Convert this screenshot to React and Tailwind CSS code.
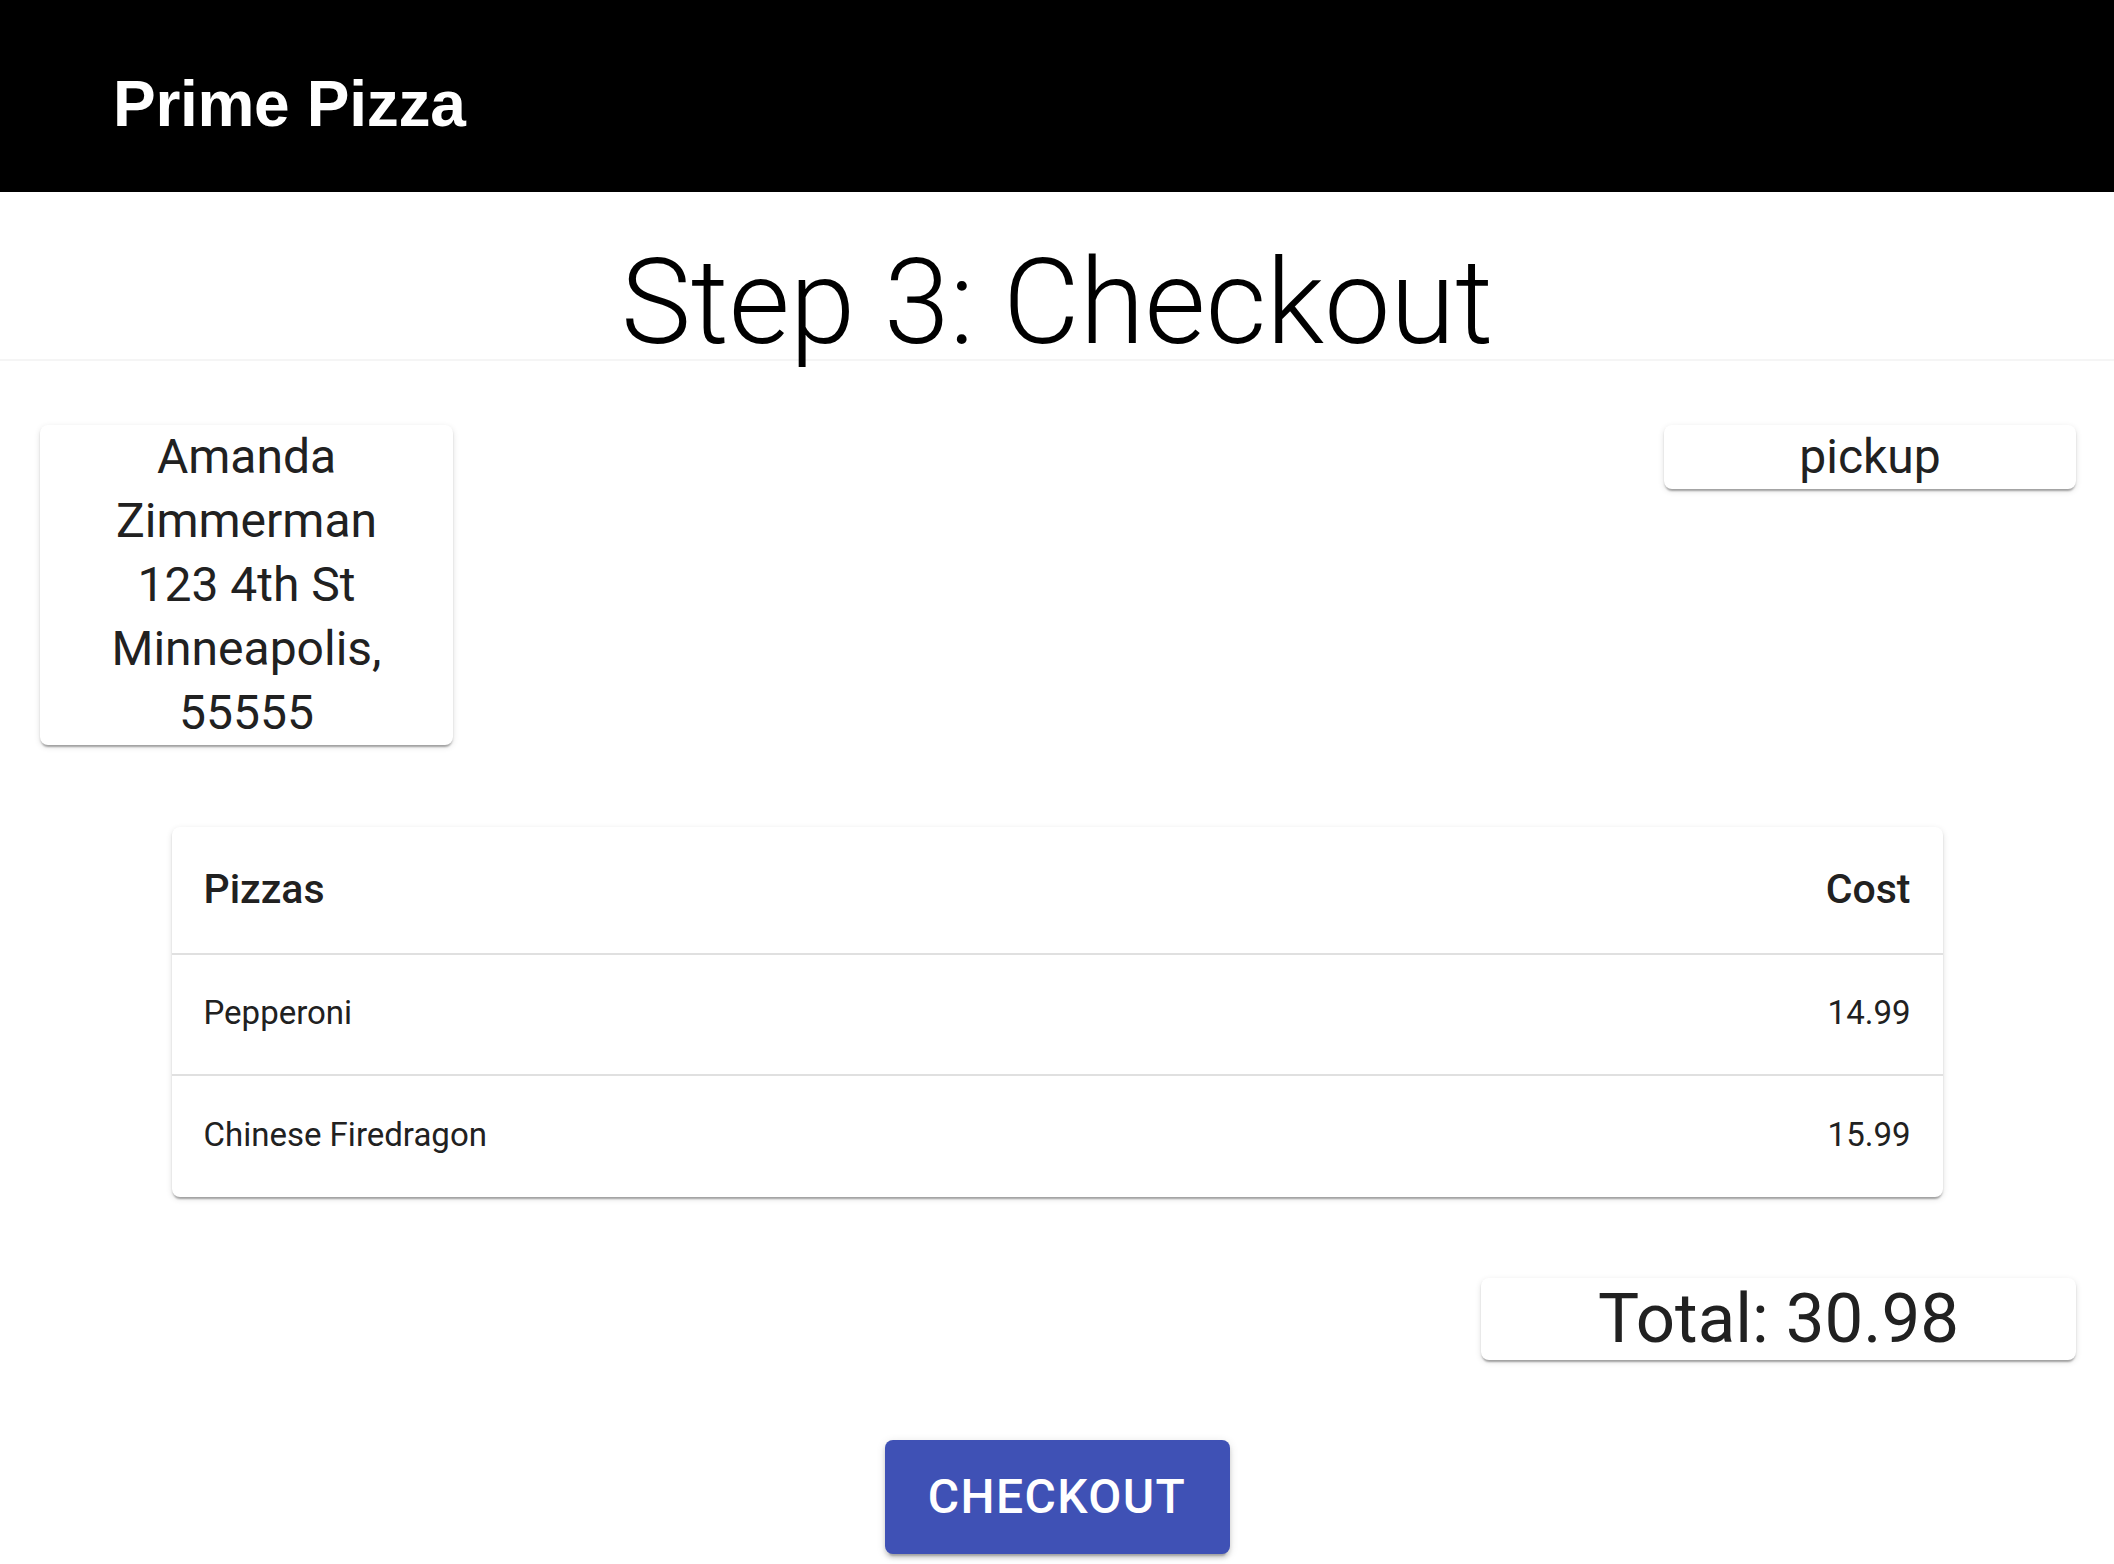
import React from 'react'

// Checkout step — order summary with customer, delivery type, pizza list and total
const pizzas = [
  { name: 'Pepperoni', cost: '14.99' },
  { name: 'Chinese Firedragon', cost: '15.99' },
]

const paper =
  'bg-white rounded-[8px] shadow-[0_4px_2px_-2px_rgba(0,0,0,0.2),0_2px_2px_0_rgba(0,0,0,0.14),0_2px_6px_0_rgba(0,0,0,0.12)]'

export default function App() {
  return (
    <div className="min-h-screen bg-white font-['Roboto',sans-serif] text-[#212121]">
      <header className="h-[192px] bg-black pl-[113px] pt-[72px]">
        <h1 className="font-['Liberation_Sans',Arial,sans-serif] text-[64px] font-bold leading-[64px] tracking-[-0.3px] text-white">
          Prime Pizza
        </h1>
      </header>

      <div className="h-[169px] border-b-2 border-[#f5f5f5] pt-[51px]">
        <h2 className="text-center text-[118px] font-light leading-[120px] text-black">
          Step 3: Checkout
        </h2>
      </div>

      <div className="mt-[64px] flex items-start justify-between pl-[40px] pr-[38px]">
        <div className={`${paper} w-[413px] text-center text-[48px] leading-[64px]`}>
          <div>Amanda</div>
          <div>Zimmerman</div>
          <div>123 4th St</div>
          <div>Minneapolis,</div>
          <div>55555</div>
        </div>
        <div className={`${paper} w-[412px] text-center text-[48px] leading-[64px]`}>
          pickup
        </div>
      </div>

      <div className={`${paper} mx-auto mt-[82px] w-[1771px]`}>
        <div className="flex h-[128px] items-center justify-between border-b-2 border-[#e0e0e0] px-[32px] text-[41px] font-medium">
          <span>Pizzas</span>
          <span>Cost</span>
        </div>
        {pizzas.map((p, i) => (
          <div
            key={p.name}
            className={`flex h-[121px] items-center justify-between px-[32px] pb-[3px] text-[33px] ${
              i < pizzas.length - 1 ? 'border-b-2 border-[#e0e0e0]' : ''
            }`}
          >
            <span>{p.name}</span>
            <span>{p.cost}</span>
          </div>
        ))}
      </div>

      <div className="mt-[81px] flex justify-end pr-[38px]">
        <div className={`${paper} h-[82px] w-[595px] text-center text-[69px] leading-[82px]`}>
          Total: 30.98
        </div>
      </div>

      <div className="mt-[80px] flex justify-center pb-[10px]">
        <button className="h-[114px] w-[345px] rounded-[8px] bg-[#3f51b5] text-[48px] font-medium uppercase tracking-[1.4px] text-white shadow-[0_6px_2px_-4px_rgba(0,0,0,0.2),0_4px_4px_0_rgba(0,0,0,0.14),0_2px_10px_0_rgba(0,0,0,0.12)]">
          Checkout
        </button>
      </div>
    </div>
  )
}
